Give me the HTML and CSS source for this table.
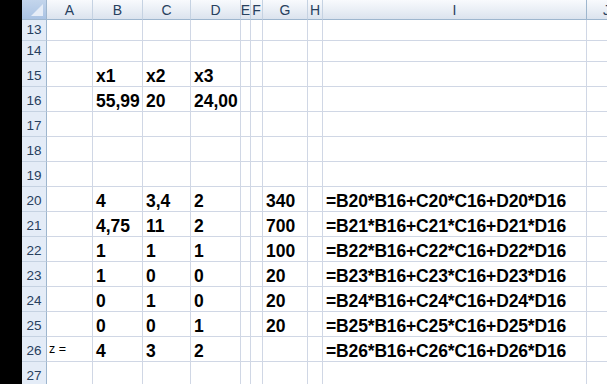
FILE: index.html
```html
<!DOCTYPE html>
<html>
<head>
<meta charset="utf-8">
<link rel="stylesheet" href="styles.css">
</head>
<body>
<div class="screen">
  <div class="edge"></div>
  <div class="sheet">
    <div class="corner"><span class="tri"></span></div>
    <div class="ch">A</div><div class="ch">B</div><div class="ch">C</div><div class="ch">D</div><div class="ch">E</div><div class="ch">F</div><div class="ch">G</div><div class="ch">H</div><div class="ch">I</div><div class="ch">J</div>

    <div class="rh r21">13</div><div class="c r21"></div><div class="c r21"></div><div class="c r21"></div><div class="c r21"></div><div class="c r21"></div><div class="c r21"></div><div class="c r21"></div><div class="c r21"></div><div class="c r21"></div><div class="c r21"></div>
    <div class="rh r21">14</div><div class="c r21"></div><div class="c r21"></div><div class="c r21"></div><div class="c r21"></div><div class="c r21"></div><div class="c r21"></div><div class="c r21"></div><div class="c r21"></div><div class="c r21"></div><div class="c r21"></div>

    <div class="rh">15</div><div class="c"></div><div class="c b">x1</div><div class="c b">x2</div><div class="c b">x3</div><div class="c"></div><div class="c"></div><div class="c"></div><div class="c"></div><div class="c"></div><div class="c"></div>
    <div class="rh">16</div><div class="c"></div><div class="c b">55,99</div><div class="c b">20</div><div class="c b">24,00</div><div class="c"></div><div class="c"></div><div class="c"></div><div class="c"></div><div class="c"></div><div class="c"></div>
    <div class="rh">17</div><div class="c"></div><div class="c"></div><div class="c"></div><div class="c"></div><div class="c"></div><div class="c"></div><div class="c"></div><div class="c"></div><div class="c"></div><div class="c"></div>
    <div class="rh">18</div><div class="c"></div><div class="c"></div><div class="c"></div><div class="c"></div><div class="c"></div><div class="c"></div><div class="c"></div><div class="c"></div><div class="c"></div><div class="c"></div>
    <div class="rh">19</div><div class="c"></div><div class="c"></div><div class="c"></div><div class="c"></div><div class="c"></div><div class="c"></div><div class="c"></div><div class="c"></div><div class="c"></div><div class="c"></div>
    <div class="rh">20</div><div class="c"></div><div class="c b">4</div><div class="c b">3,4</div><div class="c b">2</div><div class="c"></div><div class="c"></div><div class="c b">340</div><div class="c"></div><div class="c b f">=B20*B16+C20*C16+D20*D16</div><div class="c"></div>
    <div class="rh">21</div><div class="c"></div><div class="c b">4,75</div><div class="c b">11</div><div class="c b">2</div><div class="c"></div><div class="c"></div><div class="c b">700</div><div class="c"></div><div class="c b f">=B21*B16+C21*C16+D21*D16</div><div class="c"></div>
    <div class="rh">22</div><div class="c"></div><div class="c b">1</div><div class="c b">1</div><div class="c b">1</div><div class="c"></div><div class="c"></div><div class="c b">100</div><div class="c"></div><div class="c b f">=B22*B16+C22*C16+D22*D16</div><div class="c"></div>
    <div class="rh">23</div><div class="c"></div><div class="c b">1</div><div class="c b">0</div><div class="c b">0</div><div class="c"></div><div class="c"></div><div class="c b">20</div><div class="c"></div><div class="c b f">=B23*B16+C23*C16+D23*D16</div><div class="c"></div>
    <div class="rh">24</div><div class="c"></div><div class="c b">0</div><div class="c b">1</div><div class="c b">0</div><div class="c"></div><div class="c"></div><div class="c b">20</div><div class="c"></div><div class="c b f">=B24*B16+C24*C16+D24*D16</div><div class="c"></div>
    <div class="rh">25</div><div class="c"></div><div class="c b">0</div><div class="c b">0</div><div class="c b">1</div><div class="c"></div><div class="c"></div><div class="c b">20</div><div class="c"></div><div class="c b f">=B25*B16+C25*C16+D25*D16</div><div class="c"></div>
    <div class="rh">26</div><div class="c sm">z =</div><div class="c b">4</div><div class="c b">3</div><div class="c b">2</div><div class="c"></div><div class="c"></div><div class="c"></div><div class="c"></div><div class="c b f">=B26*B16+C26*C16+D26*D16</div><div class="c"></div>
    <div class="rh">27</div><div class="c"></div><div class="c"></div><div class="c"></div><div class="c"></div><div class="c"></div><div class="c"></div><div class="c"></div><div class="c"></div><div class="c"></div><div class="c"></div>
  </div>
</div>
</body>
</html>
```
FILE: styles.css
```css
* { box-sizing: border-box; }
html, body { margin: 0; padding: 0; background: #fff; overflow: hidden; }
.screen { display: flex; width: 607px; height: 384px; overflow: hidden; }
.edge { width: 22px; flex: none; background: #000; }
.sheet {
  display: grid;
  grid-template-columns: 25px 46px 50px 48px 50px 10px 12px 45px 15px 264px 40px;
  grid-template-rows: 20px 21px 21px repeat(13, 25px);
  flex: none;
  font-family: "Liberation Sans", Arial, sans-serif;
}
.corner {
  position: relative;
  background: linear-gradient(#c3d5ec, #aac3e3);
  border-right: 1px solid #9eb6ce;
  border-bottom: 1px solid #9eb6ce;
}
.tri {
  position: absolute; right: 3px; bottom: 3px;
  width: 0; height: 0;
  border-left: 12px solid transparent;
  border-bottom: 12px solid #e6edf7;
}
.ch {
  background: linear-gradient(#f8fafd, #e9eef5 55%, #dbe3ee);
  border-right: 1px solid #c5d2e2;
  border-bottom: 1px solid #9eb6ce;
  color: #27405e;
  font-size: 14px;
  display: flex; align-items: center; justify-content: center;
  padding-top: 1px;
}
.ch:nth-child(10) { border-right-color: #9eb6ce; }
.rh {
  background: #e4ecf7;
  border-right: 1px solid #9eb6ce;
  border-bottom: 1px solid #c5d2e2;
  color: #27405e;
  font-size: 13.5px;
  display: flex; align-items: flex-end; justify-content: center;
  padding-bottom: 3px;
}
.c {
  border-right: 1px solid #d0d7e5;
  border-bottom: 1px solid #d0d7e5;
  display: flex; align-items: flex-end;
  padding-left: 3px;
  white-space: nowrap;
  overflow: visible;
}
.b { font-weight: bold; font-size: 17.5px; line-height: 1.15; color: #000; }
.f { letter-spacing: -0.15px; }
.sm { font-size: 12.5px; padding-bottom: 5px; padding-left: 2px; }
```
